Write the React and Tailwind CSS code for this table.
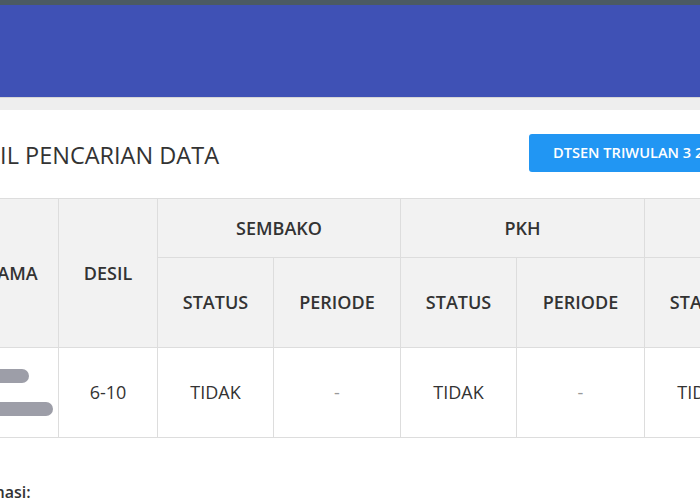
import React from 'react';

const font = { fontFamily: '"Open Sans", "Liberation Sans", sans-serif' };

function Redacted() {
  return (
    <div className="flex flex-col gap-[19px] items-start pl-[10px]">
      <div className="h-[14px] w-[56px] rounded-full bg-[#9d9ea8]" />
      <div className="h-[14px] w-[80px] rounded-full bg-[#9d9ea8]" />
    </div>
  );
}

export default function App() {
  const th = 'border border-[#dddddd] bg-[#f2f2f2] font-semibold text-[18px] text-[#333333] text-center align-middle';
  const td = 'border border-[#dddddd] bg-white text-[18px] text-[#333333] text-center align-middle';

  return (
    <div className="w-[700px] h-[500px] overflow-hidden bg-white" style={font}>
      <div className="h-[5px] bg-[#4b5a63]" />
      <div className="h-[92px] bg-[#3f51b5]" />
      <div className="h-[13px] bg-[#eeeeee] border-t border-[#d6d6d6]" />

      <div className="flex items-center h-[88px]">
        <h1 className="-ml-[45px] mt-[4px] text-[23.5px] font-normal text-[#333333] whitespace-nowrap">
          HASIL PENCARIAN DATA
        </h1>
        <button className="ml-auto -mr-[89px] mt-[-2px] h-[38px] w-[260px] shrink-0 rounded-[3px] bg-[#2196f3] px-6 text-left text-[14.6px] font-semibold text-white whitespace-nowrap">
          DTSEN TRIWULAN 3 2025
        </button>
      </div>

      <table className="-ml-[38px] table-fixed border-collapse w-[856px]">
        <colgroup>
          <col className="w-[96px]" />
          <col className="w-[99px]" />
          <col className="w-[116px]" />
          <col className="w-[127px]" />
          <col className="w-[116px]" />
          <col className="w-[128px]" />
          <col className="w-[116px]" />
          <col className="w-[58px]" />
        </colgroup>
        <thead>
          <tr className="h-[59px]">
            <th rowSpan={2} className={th}>NAMA</th>
            <th rowSpan={2} className={th}>DESIL</th>
            <th colSpan={2} className={th}>SEMBAKO</th>
            <th colSpan={2} className={th}>PKH</th>
            <th colSpan={2} className={th}>BPNT</th>
          </tr>
          <tr className="h-[90px]">
            <th className={th}>STATUS</th>
            <th className={th}>PERIODE</th>
            <th className={th}>STATUS</th>
            <th className={th}>PERIODE</th>
            <th className={th}>STATUS</th>
            <th className={th}>PERIODE</th>
          </tr>
        </thead>
        <tbody>
          <tr className="h-[90px]">
            <td className="border border-[#dddddd] bg-white align-middle">
              <Redacted />
            </td>
            <td className={td}>6-10</td>
            <td className={td}>TIDAK</td>
            <td className={td + ' !text-[#999999]'}>-</td>
            <td className={td}>TIDAK</td>
            <td className={td + ' !text-[#999999]'}>-</td>
            <td className={td}>TIDAK</td>
            <td className={td + ' !text-[#999999]'}>-</td>
          </tr>
        </tbody>
      </table>

      <p className="-ml-[48px] mt-[42px] text-[16px] font-semibold text-[#333333]">Informasi:</p>
    </div>
  );
}
